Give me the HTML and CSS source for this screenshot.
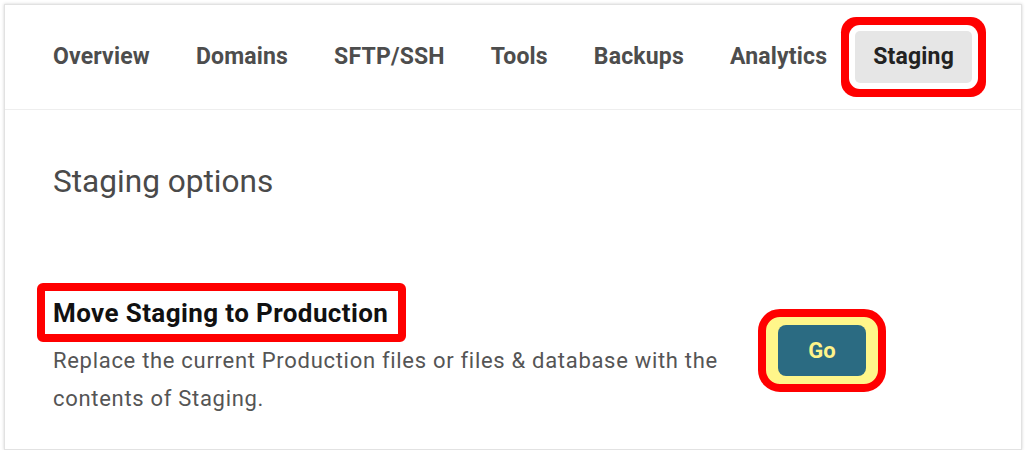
FILE: index.html
```html
<!DOCTYPE html>
<html>
<head>
<meta charset="utf-8">
<link rel="stylesheet" href="styles.css">
</head>
<body>
<div class="card">
  <nav class="tabs">
    <span class="tab">Overview</span>
    <span class="tab">Domains</span>
    <span class="tab">SFTP/SSH</span>
    <span class="tab">Tools</span>
    <span class="tab">Backups</span>
    <span class="tab">Analytics</span>
    <span class="tab active">Staging</span>
  </nav>
  <section class="content">
    <h1 class="title">Staging options</h1>
    <div class="option">
      <div class="option-text">
        <h2 class="option-head">Move Staging to Production</h2>
        <p class="option-desc">Replace the current Production files or files &amp; database with the contents of Staging.</p>
      </div>
      <div class="ring">
        <button class="go">Go</button>
      </div>
    </div>
  </section>
</div>
</body>
</html>
```

FILE: styles.css
```css
html, body {
  margin: 0;
  padding: 0;
  background: #ffffff;
}
body {
  padding: 4px 3px 0 4px;
  font-family: Roboto, "Liberation Sans", sans-serif;
}
.card {
  height: 446px;
  border: 1px solid #e2e2e2;
  box-shadow: 0 0 3px rgba(0,0,0,0.18);
  background: #fff;
  box-sizing: border-box;
}
.tabs {
  display: flex;
  align-items: center;
  gap: 10px;
  height: 103px;
  padding-left: 30px;
  padding-bottom: 1px;
  border-bottom: 1px solid #eeeeee;
}
.tab {
  display: flex;
  align-items: center;
  height: 52px;
  padding: 0 18px;
  font-size: 23px;
  letter-spacing: 0.18px;
  font-weight: 700;
  color: #4d4d4d;
  border-radius: 5px;
}
.tab.active {
  background: #e6e6e6;
  color: #222;
  box-shadow: 0 0 0 6px #fff, 0 0 0 14px #ff0000;
}
.content {
  padding: 52px 0 0 48px;
}
.title {
  margin: 0;
  font-size: 31.6px;
  font-weight: 400;
  line-height: 40px;
  color: #4a4a4a;
}
.option {
  display: grid;
  grid-template-columns: 680px auto;
  column-gap: 25px;
  align-items: center;
  margin-top: 81px;
}
.option-head {
  display: inline-block;
  margin: 0 0 0 -16px;
  padding: 2px 10px 0 8px;
  height: 41px;
  line-height: 41px;
  border: 8px solid #ff0000;
  border-radius: 6px;
  font-size: 26px;
  letter-spacing: 0.4px;
  font-weight: 700;
  color: #111;
}
.option-desc {
  margin: 0;
  font-size: 22px;
  letter-spacing: 0.7px;
  line-height: 38px;
  color: #555;
}
.ring {
  justify-self: start;
  display: flex;
  padding: 8px 12px;
  background: #fff68a;
  border: 8px solid #ff0000;
  border-radius: 22px;
}
.go {
  width: 88px;
  height: 51px;
  border: none;
  border-radius: 8px;
  background: #2b6b82;
  color: #fff38a;
  font-family: Roboto, "Liberation Sans", sans-serif;
  font-size: 22px;
  font-weight: 700;
  padding: 0;
}
```
